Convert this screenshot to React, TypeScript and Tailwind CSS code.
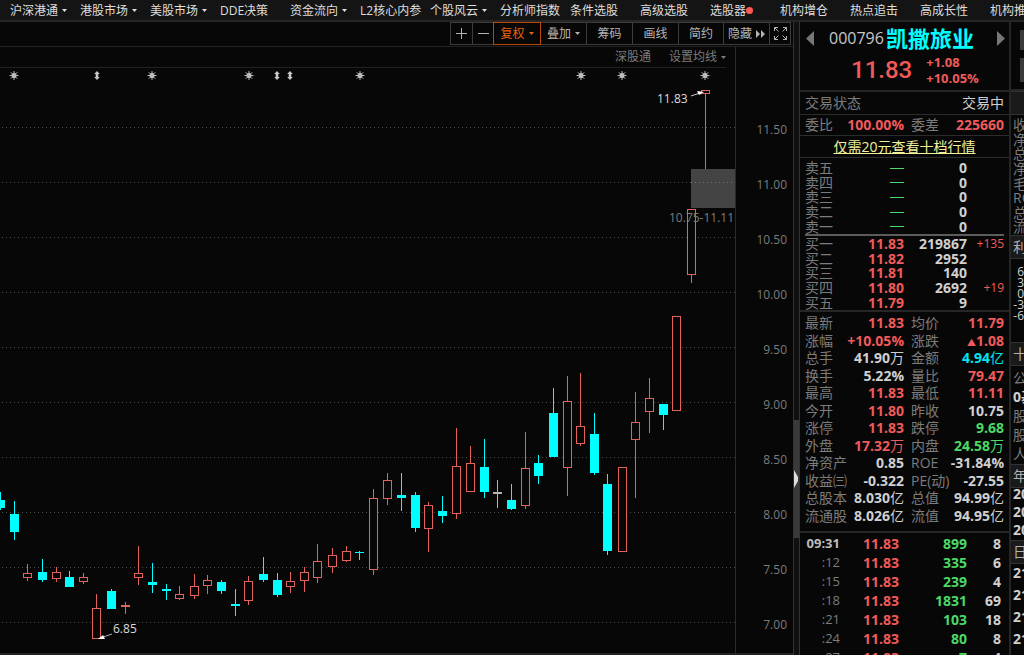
import { ReactNode } from "react";
import clsx from "clsx";

type Tone = "red" | "green" | "cyan" | "white";

const tones: Record<Tone, string> = {
  red: "text-[#f05a5a]",
  green: "text-[#4cd964]",
  cyan: "text-[#00e5ee]",
  white: "text-[#d0d0d0]",
};

const menu: [string, string?][] = [
  ["沪深港通", "caret"],
  ["港股市场", "caret"],
  ["美股市场", "caret"],
  ["DDE决策"],
  ["资金流向", "caret"],
  ["L2核心内参"],
  ["个股风云", "caret"],
  ["分析师指数"],
  ["条件选股"],
  ["高级选股"],
  ["选股器", "dot"],
  ["机构增仓"],
  ["热点追击"],
  ["高成长性"],
  ["机构推荐"],
];

// chart y values are measured from the top of the window
const TOP = 68;

// x, high, body top, body bottom, low, kind
type Candle = [number, number, number, number, number, "up" | "down" | "flat"];

const candles: Candle[] = [
  [0, 492, 500, 508, 510, "down"],
  [14, 501, 514, 532, 540, "down"],
  [27, 564, 573, 578, 581, "up"],
  [42, 559, 572, 580, 582, "down"],
  [56, 567, 572, 579, 582, "up"],
  [69, 571, 577, 587, 587, "down"],
  [83, 573, 577, 582, 584, "up"],
  [96, 594, 608, 639, 639, "up"],
  [111, 589, 591, 609, 609, "down"],
  [125, 602, 605, 607, 614, "up"],
  [138, 546, 573, 578, 585, "up"],
  [152, 563, 582, 585, 593, "down"],
  [166, 584, 589, 591, 600, "down"],
  [179, 586, 594, 599, 600, "up"],
  [194, 574, 586, 596, 599, "up"],
  [207, 575, 580, 586, 594, "up"],
  [221, 580, 582, 591, 594, "down"],
  [235, 589, 604, 606, 616, "down"],
  [248, 576, 581, 601, 605, "up"],
  [263, 557, 574, 580, 582, "down"],
  [277, 573, 580, 595, 597, "down"],
  [290, 572, 581, 587, 593, "up"],
  [304, 567, 572, 581, 592, "up"],
  [317, 544, 561, 578, 583, "up"],
  [332, 548, 555, 567, 573, "up"],
  [346, 546, 551, 561, 562, "up"],
  [359, 551, 552, 553, 560, "down"],
  [373, 489, 498, 570, 575, "up"],
  [387, 473, 480, 499, 505, "up"],
  [401, 473, 495, 498, 511, "down"],
  [415, 492, 495, 528, 532, "down"],
  [428, 502, 505, 529, 552, "up"],
  [442, 496, 511, 516, 523, "down"],
  [456, 428, 466, 514, 519, "up"],
  [470, 446, 463, 492, 492, "up"],
  [484, 439, 467, 492, 498, "down"],
  [497, 480, 492, 494, 508, "flat"],
  [511, 484, 500, 509, 510, "down"],
  [525, 432, 468, 506, 509, "up"],
  [538, 455, 463, 476, 484, "down"],
  [553, 388, 413, 457, 457, "down"],
  [567, 376, 401, 468, 496, "up"],
  [580, 373, 426, 444, 446, "up"],
  [594, 413, 434, 473, 475, "down"],
  [607, 474, 484, 551, 555, "down"],
  [622, 467, 467, 552, 552, "up"],
  [635, 392, 422, 440, 498, "up"],
  [649, 378, 398, 412, 433, "up"],
  [663, 404, 404, 415, 430, "down"],
  [676, 316, 316, 411, 411, "up"],
  [691, 209, 209, 275, 283, "up"],
  [705, 90, 90, 94, 169, "up"],
];

const candleColors = { up: "#e3625c", down: "#00ffff", flat: "#b5b5b5" };
const gridLines = [127, 182, 237, 292, 347, 402, 457, 512, 567, 622];
const stars = [14, 152, 249, 360, 581, 622, 705];
const splits = [97, 277, 290];
const axis = [
  "11.50",
  "11.00",
  "10.50",
  "10.00",
  "9.50",
  "9.00",
  "8.50",
  "8.00",
  "7.50",
  "7.00",
];

const sells = ["卖五", "卖四", "卖三", "卖二", "卖一"];

const buys = [
  ["买一", "11.83", "219867", "+135"],
  ["买二", "11.82", "2952", ""],
  ["买三", "11.81", "140", ""],
  ["买四", "11.80", "2692", "+19"],
  ["买五", "11.79", "9", ""],
];

const stats: [string, string, Tone, string, string, Tone][] = [
  ["最新", "11.83", "red", "均价", "11.79", "red"],
  ["涨幅", "+10.05%", "red", "涨跌", "▲1.08", "red"],
  ["总手", "41.90万", "white", "金额", "4.94亿", "cyan"],
  ["换手", "5.22%", "white", "量比", "79.47", "red"],
  ["最高", "11.83", "red", "最低", "11.11", "red"],
  ["今开", "11.80", "red", "昨收", "10.75", "white"],
  ["涨停", "11.83", "red", "跌停", "9.68", "green"],
  ["外盘", "17.32万", "red", "内盘", "24.58万", "green"],
  ["净资产", "0.85", "white", "ROE", "-31.84%", "white"],
  ["收益㈢", "-0.322", "white", "PE(动)", "-27.55", "white"],
  ["总股本", "8.030亿", "white", "总值", "94.99亿", "white"],
  ["流通股", "8.026亿", "white", "流值", "94.95亿", "white"],
];

const ticks = [
  ["09:31", "899", "8"],
  [":12", "335", "6"],
  [":15", "239", "4"],
  [":18", "1831", "69"],
  [":21", "103", "18"],
  [":24", "80", "8"],
  [":27", "7", "4"],
];

const Caret = () => (
  <svg width="5" height="3" viewBox="0 0 5 3" className="shrink-0 fill-current">
    <path d="M0 0h5L2.5 3z" />
  </svg>
);

const Menu = () => (
  <nav className="flex h-[22px] shrink-0 items-center overflow-hidden border-b-2 border-[#262626] bg-[#141414] pl-[10px] pt-px text-xs text-[#dedede]">
    {menu.map(([name, mark]) => (
      <a
        key={name}
        href="#"
        className="flex w-[70px] shrink-0 items-center whitespace-nowrap leading-5"
      >
        {name}
        {mark === "caret" && (
          <span className="ml-1">
            <Caret />
          </span>
        )}
        {mark === "dot" && (
          <span className="size-[7px] rounded-full bg-[#ff5a54]" />
        )}
      </a>
    ))}
  </nav>
);

const ToolButton = ({
  children,
  label,
  className = "w-[46px]",
}: {
  children: ReactNode;
  label?: string;
  className?: string;
}) => (
  <button
    aria-label={label}
    className={clsx(
      "-ml-px flex h-[23px] items-center justify-center gap-1 border",
      className
    )}
  >
    {children}
  </button>
);

const Toolbar = () => (
  <div className="flex h-[25px] shrink-0 justify-end border-b border-[#222] pr-[2px] text-xs text-[#b4b4b4]">
    <ToolButton label="放大" className="w-[23px] border-[#3c3c3c]">
      <svg width="11" height="11" className="stroke-current">
        <path d="M0 5.5h11M5.5 0v11" />
      </svg>
    </ToolButton>
    <ToolButton label="缩小" className="w-[22px] border-[#3c3c3c]">
      <svg width="11" height="11" className="stroke-current">
        <path d="M0 5.5h11" />
      </svg>
    </ToolButton>
    <ToolButton className="relative z-10 w-[48px] border-[#b8480c] text-[#e8640f]">
      复权
      <Caret />
    </ToolButton>
    <ToolButton className="w-[47px] border-[#3c3c3c]">
      叠加
      <Caret />
    </ToolButton>
    <ToolButton className="w-[47px] border-[#3c3c3c]">筹码</ToolButton>
    <ToolButton className="w-[47px] border-[#3c3c3c]">画线</ToolButton>
    <ToolButton className="w-[46px] border-[#3c3c3c]">简约</ToolButton>
    <ToolButton className="w-[47px] border-[#3c3c3c]">
      隐藏
      <svg width="9" height="8" className="fill-current">
        <path d="M0 0l4 4-4 4zM5 0l4 4-4 4z" />
      </svg>
    </ToolButton>
    <ToolButton label="全屏" className="w-[22px] border-[#3c3c3c]">
      <svg width="13" height="13" className="fill-none stroke-current">
        <path d="M.5 4V.5H4M.5.5l4 4M9 .5h3.500V4M12.500.5l-4 4M.5 9v3.500H4M.5 12.500l4-4M9 12.500h3.500V9M12.500 12.500l-4-4" />
      </svg>
    </ToolButton>
  </div>
);

const CandleShape = ({ candle }: { candle: Candle }) => {
  const [x, high, top, bottom, low, kind] = candle;
  const color = candleColors[kind];
  const hollow = kind === "up" && bottom - top > 2;
  return (
    <g fill={color} stroke="none">
      <rect x={x} y={high - TOP} width="1" height={top - high} />
      <rect x={x} y={bottom - TOP} width="1" height={low - bottom} />
      {hollow ? (
        <rect
          x={x - 3.5}
          y={top - TOP + 0.5}
          width="8"
          height={bottom - top - 1}
          fill="#070707"
          stroke={color}
        />
      ) : (
        <rect x={x - 4} y={top - TOP} width="9" height={bottom - top} />
      )}
      {bottom - top <= 2 && (
        <rect x={x} y={high - TOP} width="1" height={low - high} />
      )}
    </g>
  );
};

const Chart = () => (
  <svg className="min-h-0 w-full flex-1 text-xs" role="img" aria-label="K线图">
    <g shapeRendering="crispEdges">
      {gridLines.map((y) => (
        <line
          key={y}
          x1="2"
          x2="100%"
          y1={y - TOP + 0.5}
          y2={y - TOP + 0.5}
          stroke="#4c4c4c"
          strokeDasharray="1 3"
        />
      ))}
      <rect x="691" y={169 - TOP} width="44" height="39" fill="#444" />
      <path
        d={`M691 ${182.5 - TOP}h44`}
        stroke="#777"
        strokeDasharray="1 3"
      />
      {candles.map((c) => (
        <CandleShape key={c[0]} candle={c} />
      ))}
    </g>
    {stars.map((x) => (
      <g key={x} transform={`translate(${x} ${75.5 - TOP})`}>
        <circle r="2.500" fill="#d0d0d0" />
        <path
          d="M-4.500 0h9M0-4.500v9M-3.200-3.200l6.400 6.400M-3.200 3.200l6.400-6.400"
          stroke="#b8b8b8"
        />
      </g>
    ))}
    {splits.map((x) => (
      <path
        key={x}
        transform={`translate(${x} ${75.5 - TOP})`}
        d="M0-4.500L2.800-1.500H1.300v3h1.500L0 4.500-2.800 1.500h1.500v-3h-1.500z"
        fill="#c8c8c8"
      />
    ))}
    <text x="657" y={103 - TOP} fill="#dcdcdc">
      11.83
    </text>
    <path d={`M691 ${96 - TOP}l9-3`} stroke="#ccc" />
    <path d={`M704 ${92 - TOP}l-7-1 2 4z`} fill="#fff" />
    <text x="669" y={222 - TOP} fill="#7d7d7d">
      10.75-11.11
    </text>
    <text x="113" y={633 - TOP} fill="#dcdcdc">
      6.85
    </text>
    <path d={`M112 ${634 - TOP}l-9 3`} stroke="#aaa" />
    <path d={`M98 ${639 - TOP}l5-4 2 4z`} fill="#fff" />
  </svg>
);

const Value = ({ text, tone }: { text: string; tone: Tone }) => {
  const unit = /[万亿]$/.test(text) ? text.slice(-1) : "";
  const up = text.startsWith("▲");
  const number = text.slice(up ? 1 : 0, text.length - unit.length);
  return (
    <span className={clsx("text-right font-bold", tones[tone])}>
      {up && <span className="text-[9px] leading-none">▲</span>}
      {number}
      <span className="font-normal">{unit}</span>
    </span>
  );
};

const Quote = () => (
  <aside className="flex w-[209px] shrink-0 flex-col overflow-hidden text-sm text-[#7c7c7c]">
    <div className="h-[70px] shrink-0 border-b-2 border-[#262626]">
      <div className="flex h-[32px] items-center pl-[6px] pr-[4px]">
        <button aria-label="上一只">
          <svg width="8" height="15" className="fill-[#777]">
            <path d="M8 0v15L0 7.500z" />
          </svg>
        </button>
        <h1 className="ml-[15px] flex items-center gap-[2px] whitespace-nowrap">
          <span className="text-base text-[#c8c8c8]">000796</span>
          <span className="text-[22px] font-bold leading-6 text-[#00ffff]">
            凯撒旅业
          </span>
        </h1>
        <button aria-label="下一只" className="ml-auto">
          <svg width="8" height="15" className="fill-[#777]">
            <path d="M0 0v15l8-7.500z" />
          </svg>
        </button>
      </div>
      <div className="flex items-center gap-[14px] pl-[51px] text-[#f05a5a]">
        <span className="font-[Roboto] text-2xl font-medium leading-7">
          11.83
        </span>
        <span className="text-[13px] font-bold leading-4">
          +1.08
          <br />
          +10.05%
        </span>
      </div>
    </div>
    <div className="flex h-[23px] shrink-0 items-center justify-between border-b border-[#2c2c2c] px-[5px]">
      <span>交易状态</span>
      <span className="text-[#cfcfcf]">交易中</span>
    </div>
    <div className="grid h-[21px] shrink-0 grid-cols-[99px_36px_1fr] items-center border-b border-[#2c2c2c] px-[5px] leading-5">
      <div className="flex justify-between">
        <span>委比</span>
        <Value text="100.00%" tone="red" />
      </div>
      <span className="whitespace-nowrap pl-[7px]">委差</span>
      <Value text="225660" tone="red" />
    </div>
    <a
      href="#"
      className="h-[22px] shrink-0 border-b border-[#2c2c2c] text-center leading-[22px] text-[#f2f29a] underline"
    >
      仅需20元查看十档行情
    </a>
    <table className="mx-[5px] mt-[3px] block shrink-0 border-b-2 border-[#5c5c5c]">
      <tbody className="grid h-[73px] grid-rows-5">
        {sells.map((name) => (
          <tr
            key={name}
            className="grid grid-cols-[36px_63px_63px_1fr] items-center leading-[14px]"
          >
            <td>{name}</td>
            <td className="flex justify-end">
              <span className="h-px w-[14px] bg-[#4cd964]" />
            </td>
            <td className="text-right font-bold text-[#d0d0d0]">0</td>
          </tr>
        ))}
      </tbody>
    </table>
    <table className="block shrink-0 border-b-2 border-[#262626] px-[5px] pt-px">
      <tbody className="grid h-[73px] grid-rows-5">
        {buys.map(([name, price, volume, change]) => (
          <tr
            key={name}
            className="grid grid-cols-[36px_63px_63px_1fr] items-center leading-[14px]"
          >
            <td>{name}</td>
            <td className="text-right font-bold text-[#f05a5a]">{price}</td>
            <td className="text-right font-bold text-[#d0d0d0]">{volume}</td>
            <td className="text-right text-xs leading-[14px] text-[#f05a5a]">
              {change}
            </td>
          </tr>
        ))}
      </tbody>
    </table>
    <div className="shrink-0 border-b-2 border-[#262626] px-[5px] pb-[7px] pt-[2px]">
      <div className="grid h-[210px] grid-rows-12">
        {stats.map(([name, value, tone, name2, value2, tone2]) => (
          <div
            key={name}
            className="grid grid-cols-[99px_1fr] items-center gap-[7px] whitespace-nowrap leading-[17px]"
          >
            <div className="flex justify-between">
              <span>{name}</span>
              <Value text={value} tone={tone} />
            </div>
            <div className="flex justify-between">
              <span>{name2}</span>
              <Value text={value2} tone={tone2} />
            </div>
          </div>
        ))}
      </div>
    </div>
    <table className="block px-[5px] pt-px">
      <tbody className="block">
        {ticks.map(([time, volume, count]) => (
          <tr
            key={time}
            className="grid grid-cols-[35px_59px_68px_1fr] pr-[3px] text-right font-bold leading-[19px]"
          >
            <td
              className={
                time === "09:31"
                  ? "text-[13px] leading-[19px] text-[#bdbdbd]"
                  : "text-[13px] font-normal leading-[19px]"
              }
            >
              {time}
            </td>
            <td className="text-[#f05a5a]">11.83</td>
            <td className="text-[#4cd964]">{volume}</td>
            <td className="text-[#d0d0d0]">{count}</td>
          </tr>
        ))}
      </tbody>
    </table>
  </aside>
);

const Band = ({ children }: { children?: ReactNode }) => (
  <div className="h-[24px] shrink-0 border-y border-[#333] bg-[#1a1a1a] pl-[2px] leading-[22px] text-[#b0b0b0]">
    {children}
  </div>
);

const Finance = () => (
  <aside className="flex w-[15px] shrink-0 flex-col overflow-hidden whitespace-nowrap border-l-2 border-[#262626] text-sm text-[#7c7c7c]">
    <div className="flex h-[69px] shrink-0 flex-col gap-2 border-b-2 border-[#262626] pl-[9px] pt-2">
      <div className="h-5 bg-[#3a3a3a]" />
      <div className="h-6 bg-[#3a3a3a]" />
    </div>
    <Band />
    <div className="grid h-[120px] shrink-0 grid-rows-8 pl-[2px] pt-[3px] leading-[14px]">
      {["收", "净", "总", "净", "毛", "RO", "总", "流"].map((t, i) => (
        <span key={i}>{t}</span>
      ))}
    </div>
    <Band>利</Band>
    <div className="h-[83px] shrink-0 pt-[7px] text-right text-xs leading-[11px] text-[#cfcfcf]">
      {["6", "3", "0", "-3", "-6"].map((t) => (
        <div key={t}>{t}</div>
      ))}
    </div>
    <Band>十</Band>
    <div className="h-[98px] shrink-0 pl-[2px] pt-[2px] leading-[19px]">
      <div>公</div>
      <div className="font-bold text-[#d0d0d0]">0基</div>
      <div>股</div>
      <div>股</div>
      <div>人</div>
    </div>
    <Band>年</Band>
    <div className="flex h-[52px] shrink-0 flex-col gap-[6px] pl-[2px] font-bold leading-[12px] text-[#d0d0d0]">
      <div>20</div>
      <div>20</div>
      <div>20</div>
    </div>
    <Band>日</Band>
    <div className="flex flex-col gap-1 pl-[2px] font-bold leading-[18px] text-[#d0d0d0]">
      <div>21</div>
      <div>21</div>
      <div>21</div>
      <div>21</div>
    </div>
  </aside>
);

const App = () => {
  return (
    <div className="flex h-screen flex-col overflow-hidden bg-[#070707] font-['Open_Sans','Noto_Sans_CJK_SC',sans-serif]">
      <Menu />
      <div className="flex min-h-0 flex-1">
        <main className="flex min-w-0 flex-1 flex-col">
          <Toolbar />
          <div className="flex min-h-0 flex-1 border-b-2 border-[#222]">
            <div className="flex min-w-0 flex-1 flex-col">
              <div className="mr-[9px] flex h-[21px] shrink-0 items-center justify-end gap-[18px] border-b border-[#222] text-xs text-[#7c7c7c]">
                <span>深股通</span>
                <button className="flex items-center gap-1">
                  设置均线
                  <Caret />
                </button>
              </div>
              <Chart />
            </div>
            <div className="w-[58px] shrink-0 overflow-hidden border-l border-[#2a2a2a] pr-[6px] pt-[55px] text-right text-xs text-[#7c7c7c]">
              {axis.map((price) => (
                <div key={price} className="h-[55px] leading-[55px]">
                  {price}
                </div>
              ))}
            </div>
          </div>
        </main>
        <div className="flex w-[7px] shrink-0 flex-col border-x border-[#333] bg-[#101010] pt-[398px]">
          <div className="flex h-[118px] shrink-0 items-center bg-[#3a3a3a]">
            <svg width="4" height="18" className="fill-[#ddd]">
              <path d="M0 0l4 7v4l-4 7z" />
            </svg>
          </div>
        </div>
        <Quote />
        <Finance />
      </div>
    </div>
  );
};

export default App;
